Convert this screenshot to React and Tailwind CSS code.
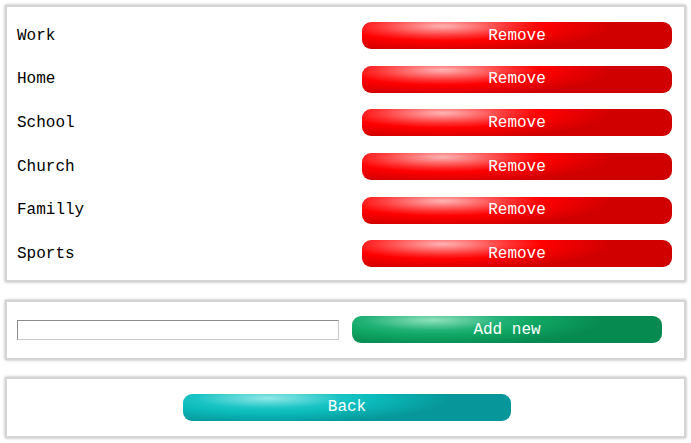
const categories = ['Work', 'Home', 'School', 'Church', 'Familly', 'Sports']

const font = "font-['Liberation_Mono','Courier_New',monospace]"

const red =
  'bg-[radial-gradient(ellipse_55%_95%_at_26%_15%,#ffb4b4_0%,#ff3030_40%,#ff0000_58%,#d00000_100%)]'
const green =
  'bg-[radial-gradient(ellipse_55%_95%_at_26%_15%,#90e2bc_0%,#22b277_40%,#10a865_58%,#078a50_100%)]'
const teal =
  'bg-[radial-gradient(ellipse_55%_95%_at_26%_15%,#92e8e8_0%,#1ac4c4_40%,#0bbbbb_58%,#07979a_100%)]'

function Panel({ className = '', children }) {
  return (
    <div
      className={`bg-white border-2 border-[#d4d4d4] shadow-[0_0_3px_#b0b0b0] ${className}`}
    >
      {children}
    </div>
  )
}

function GlossButton({ color, className = '', children }) {
  return (
    <button
      className={`${color} ${className} h-[27px] rounded-[9px] text-white text-[16px] leading-none ${font}`}
    >
      {children}
    </button>
  )
}

export default function App() {
  return (
    <div className={`w-[691px] h-[443px] bg-white px-[5px] pt-[5px] ${font}`}>
      {/* Category list */}
      <Panel className="pt-[7px] pb-[4px]">
        {categories.map(name => (
          <div key={name} className="h-[43.6px] flex items-center pl-[10px] pr-[12px]">
            <span className="flex-1 text-[16px] text-black">{name}</span>
            <GlossButton color={red} className="w-[310px]">Remove</GlossButton>
          </div>
        ))}
      </Panel>

      {/* Add new */}
      <Panel className="mt-[18px] h-[60px] flex items-center pl-[10px] pr-[20px] gap-[13px]">
        <input
          type="text"
          className="w-[322px] h-[20px] border border-[#c8c8c8] border-t-[#8c8c8c] border-l-[#8c8c8c] bg-white"
        />
        <GlossButton color={green} className="w-[310px]">Add new</GlossButton>
      </Panel>

      {/* Back */}
      <Panel className="mt-[17px] h-[61px] flex items-center justify-center">
        <GlossButton color={teal} className="w-[328px] ml-[3px]">Back</GlossButton>
      </Panel>
    </div>
  )
}
